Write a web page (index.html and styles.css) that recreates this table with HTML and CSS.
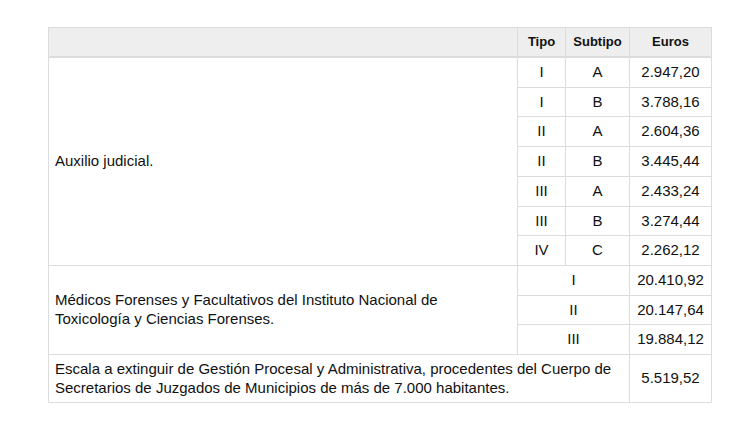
FILE: index.html
```html
<!DOCTYPE html>
<html lang="es">
<head>
<meta charset="utf-8">
<title>Tabla</title>
<link rel="stylesheet" href="styles.css">
</head>
<body>
<div class="page">
  <table class="grid">
    <colgroup>
      <col class="c-name">
      <col class="c-tipo">
      <col class="c-sub">
      <col class="c-eur">
    </colgroup>
    <thead>
      <tr>
        <th></th>
        <th>Tipo</th>
        <th>Subtipo</th>
        <th>Euros</th>
      </tr>
    </thead>
    <tbody>
      <tr>
        <td class="name" rowspan="7">Auxilio judicial.</td>
        <td class="ctr">I</td><td class="ctr">A</td><td class="ctr">2.947,20</td>
      </tr>
      <tr><td class="ctr">I</td><td class="ctr">B</td><td class="ctr">3.788,16</td></tr>
      <tr><td class="ctr">II</td><td class="ctr">A</td><td class="ctr">2.604,36</td></tr>
      <tr><td class="ctr">II</td><td class="ctr">B</td><td class="ctr">3.445,44</td></tr>
      <tr><td class="ctr">III</td><td class="ctr">A</td><td class="ctr">2.433,24</td></tr>
      <tr><td class="ctr">III</td><td class="ctr">B</td><td class="ctr">3.274,44</td></tr>
      <tr><td class="ctr">IV</td><td class="ctr">C</td><td class="ctr">2.262,12</td></tr>
      <tr>
        <td class="name" rowspan="3">Médicos Forenses y Facultativos del Instituto Nacional de<br>Toxicología y Ciencias Forenses.</td>
        <td class="ctr" colspan="2">I</td><td class="ctr">20.410,92</td>
      </tr>
      <tr><td class="ctr" colspan="2">II</td><td class="ctr">20.147,64</td></tr>
      <tr><td class="ctr" colspan="2">III</td><td class="ctr">19.884,12</td></tr>
      <tr>
        <td class="name" colspan="3">Escala a extinguir de Gestión Procesal y Administrativa, procedentes del Cuerpo de<br>Secretarios de Juzgados de Municipios de más de 7.000 habitantes.</td>
        <td class="ctr">5.519,52</td>
      </tr>
    </tbody>
  </table>
</div>
</body>
</html>
```

FILE: styles.css
```css
html, body {
  margin: 0;
  padding: 0;
  background: #fff;
}

.page {
  padding: 27px 0 0 48px;
}

.grid {
  border-collapse: collapse;
  table-layout: fixed;
  width: 663px;
  font-family: "Liberation Sans", Arial, sans-serif;
  font-size: 15px;
  line-height: 18.7px;
  color: #111;
  border: 1px solid #d6d6d6;
}

.c-name { width: 469px; }
.c-tipo { width: 48px; }
.c-sub { width: 64px; }
.c-eur { width: 82px; }

.grid th,
.grid td {
  border: 1px solid #dcdcdc;
  padding: 5px 6px;
  vertical-align: middle;
}

.grid th {
  background: #eeeeee;
  font-size: 13px;
  line-height: 18px;
  font-weight: bold;
  text-align: center;
  padding: 5px 6px 5px;
  border-bottom: 2px solid #dcdcdc;
}

.grid .ctr {
  text-align: center;
}

.grid .name {
  text-align: left;
}
```
